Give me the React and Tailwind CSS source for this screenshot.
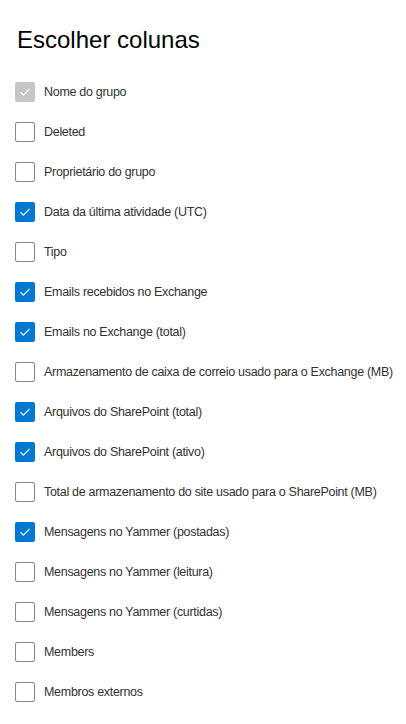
const columns = [
  { label: "Nome do grupo", state: "disabled" },
  { label: "Deleted", state: "off" },
  { label: "Proprietário do grupo", state: "off" },
  { label: "Data da última atividade (UTC)", state: "on" },
  { label: "Tipo", state: "off" },
  { label: "Emails recebidos no Exchange", state: "on" },
  { label: "Emails no Exchange (total)", state: "on" },
  { label: "Armazenamento de caixa de correio usado para o Exchange (MB)", state: "off" },
  { label: "Arquivos do SharePoint (total)", state: "on" },
  { label: "Arquivos do SharePoint (ativo)", state: "on" },
  { label: "Total de armazenamento do site usado para o SharePoint (MB)", state: "off" },
  { label: "Mensagens no Yammer (postadas)", state: "on" },
  { label: "Mensagens no Yammer (leitura)", state: "off" },
  { label: "Mensagens no Yammer (curtidas)", state: "off" },
  { label: "Members", state: "off" },
  { label: "Membros externos", state: "off" },
]

function Box({ state }) {
  if (state === "off") {
    return <span className="w-5 h-5 rounded-[2px] border border-[#8a8886] bg-white shrink-0" />
  }
  return (
    <span
      className={`w-5 h-5 rounded-[2px] flex items-center justify-center shrink-0 ${
        state === "on" ? "bg-[#0078d4]" : "bg-[#c8c6c4]"
      }`}
    >
      <svg width="12" height="12" viewBox="0 0 12 12" fill="none">
        <path d="M1.5 6.2 4.5 9.2 10.5 2.8" stroke="white" strokeWidth="1.1" />
      </svg>
    </span>
  )
}

export default function App() {
  return (
    <div className="w-[406px] h-[724px] bg-white pl-[15px] pt-[22px]" style={{ fontFamily: '"Segoe UI", "Liberation Sans", Arial, sans-serif' }}>
      <h1 className="text-[24px] leading-[36px] text-black pl-[2px] mb-[14px]">Escolher colunas</h1>
      <ul>
        {columns.map((c) => (
          <li key={c.label} className="h-10 flex items-center gap-[9px]">
            <Box state={c.state} />
            <span className="text-[12.5px] tracking-[-0.3px] whitespace-nowrap text-[#323130]">{c.label}</span>
          </li>
        ))}
      </ul>
    </div>
  )
}
